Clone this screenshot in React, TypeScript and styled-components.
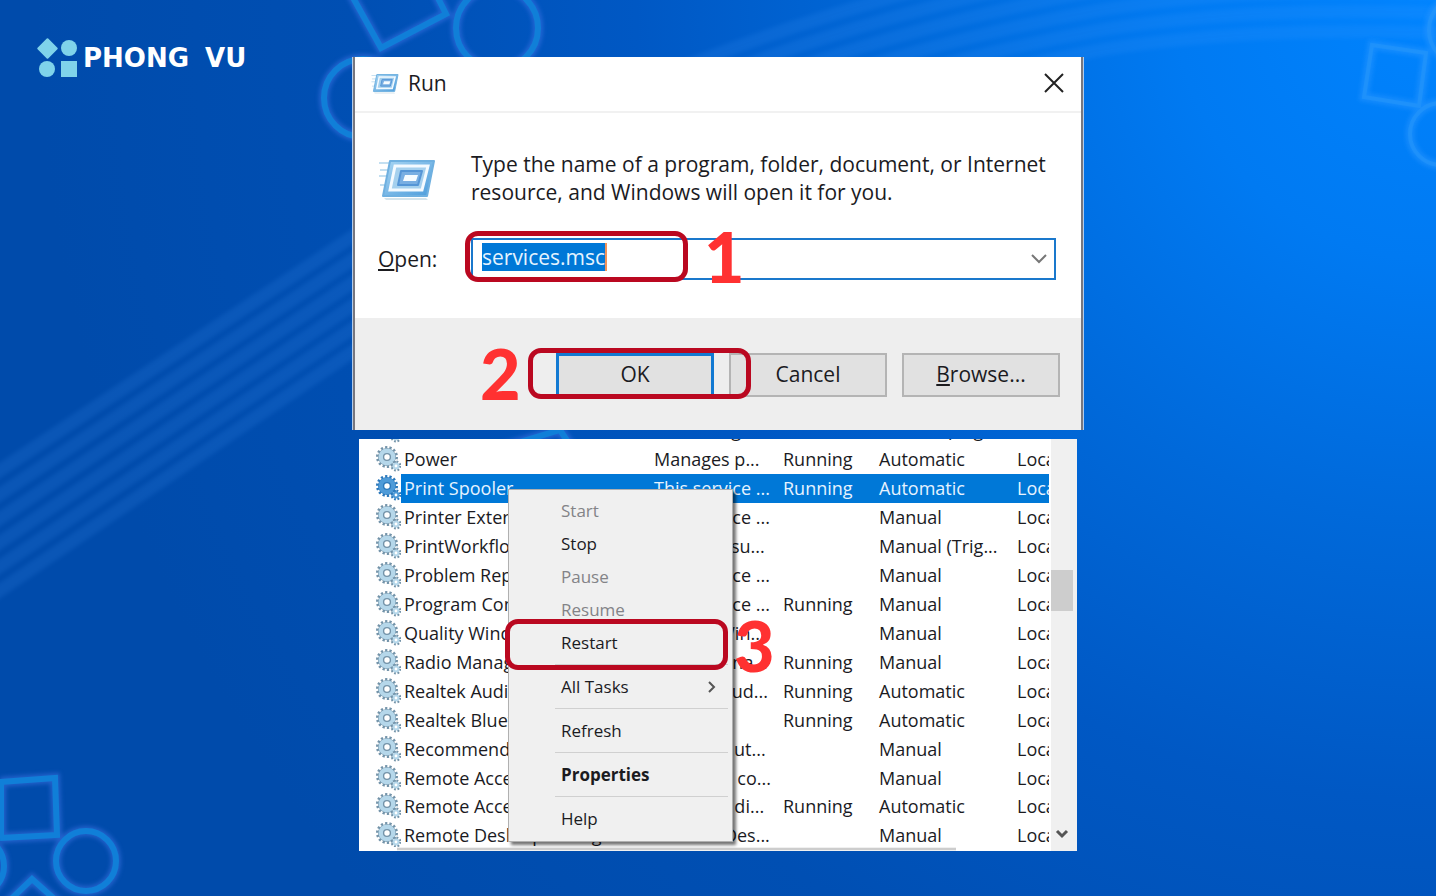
import React from "react";
import styled, { createGlobalStyle, css } from "styled-components";

const GlobalStyle = createGlobalStyle`
  *, *::before, *::after { box-sizing: border-box; }
  body {
    margin: 0;
    font-family: "Open Sans", "Noto Sans", sans-serif;
    color: #1b1b1f;
  }
`;

const Page = styled.div`
  position: relative;
  min-height: 100vh;
  overflow: hidden;
  background: radial-gradient(circle at 100% 0%, #0084ff 0, #007af2 260px, #0069da 520px, #0058c4 800px, #004fb3 1080px, #004bab 1400px);
`;

const Backdrop = styled.svg`
  position: absolute;
  inset: 0;
  width: 100%;
  height: 100%;
`;

const Brand = styled.a`
  position: absolute;
  top: 37px;
  left: 37px;
  display: flex;
  align-items: center;
  gap: 5px;
  color: #fff;
  text-decoration: none;
`;

const BrandName = styled.span`
  display: flex;
  gap: 16px;
  font: bold 26px/40px "DejaVu Sans", sans-serif;
`;

const Stage = styled.main`
  position: relative;
  display: flex;
  flex-direction: column;
  align-items: center;
  gap: 9px;
  padding: 57px 16px 45px;
`;

const Dialog = styled.section`
  position: relative;
  width: 100%;
  max-width: 732px;
  background: #fff;
  border: solid #b4cbe8;
  border-width: 0 1px;
  box-shadow: inset 2px 0 #77777f, inset -2px 0 #77777f;
`;

const TitleBar = styled.header`
  display: flex;
  align-items: center;
  gap: 9px;
  height: 56px;
  margin: 0 2px;
  padding: 0 16px 2px 16px;
  border-bottom: 2px solid #f1f1f1;
`;

const Title = styled.h1`
  flex: 1;
  margin: 0;
  font-size: 21px;
  font-weight: 400;
  line-height: 28px;
`;

const IconButton = styled.button`
  display: grid;
  place-items: center;
  padding: 0;
  border: 0;
  background: none;
`;

const DialogBody = styled.div`
  display: grid;
  grid-template-columns: 93px 1fr;
  row-gap: 32px;
  align-items: center;
  height: 205px;
  padding: 37px 27px 39px 25px;
`;

const Prompt = styled.p`
  margin: 0;
  font-size: 21px;
  line-height: 28px;
`;

const FieldLabel = styled.label`
  font-size: 21px;
  line-height: 28px;
`;

const ComboBox = styled.div`
  display: flex;
  align-items: center;
  justify-content: space-between;
  height: 42px;
  padding: 0 6px 0 9px;
  border: 2px solid #1a78cc;
`;

const CommandInput = styled.input`
  field-sizing: content;
  height: 28px;
  margin: 0 0 4px;
  padding: 0;
  border: 0;
  border-right: 2px solid #f0935a;
  border-radius: 0;
  outline: 0;
  background: #0078d7;
  color: #e4f3ff;
  font: 400 21px/28px "Open Sans", sans-serif;
`;

const DialogFooter = styled.footer`
  display: flex;
  justify-content: flex-end;
  gap: 15px;
  height: 112px;
  margin: 0 2px;
  padding: 35px 21px;
  background: #eee;
`;

const PushButton = styled.button<{ $primary?: boolean }>`
  width: 158px;
  height: 44px;
  padding: 0 0 2px;
  border: ${(p) => (p.$primary ? "3px solid #1279d2" : "2px solid #b4b4b4")};
  background: #e1e1e1;
  color: #1b1b1f;
  font: 400 21px/28px "Open Sans", sans-serif;
`;

const Services = styled.section`
  position: relative;
  width: 100%;
  max-width: 718px;
`;

const ListView = styled.div`
  display: flex;
  height: 412px;
  overflow: hidden;
  background: #fff;
`;

const ListArea = styled.div`
  flex: 1;
  min-width: 0;
  display: flex;
  flex-direction: column;
  padding-left: 16px;
`;

const Rows = styled.div`
  height: 408px;
  overflow: hidden;
`;

const Table = styled.table`
  width: 100%;
  height: 434px;
  margin-top: -23px;
  table-layout: fixed;
  border-collapse: collapse;
  font-size: 18px;
  line-height: 24px;
`;

const Cell = styled.td`
  padding: 0 0 0 3px;
  overflow: hidden;
  white-space: nowrap;
`;

const IconCell = styled(Cell)`
  padding: 0;
  line-height: 0;
`;

const Row = styled.tr<{ $selected: boolean }>`
  ${(p) =>
    p.$selected &&
    css`
      color: #e6f3ff;
      ${Cell}:not(:first-child) {
        background: #0078d7;
      }
    `}
`;

const HorizontalScroll = styled.div`
  height: 4px;
  margin-right: 93px;
  margin-left: 22px;
  border-top: 1px solid #f0f0f0;
  border-bottom: 1px solid #f0f0f0;
  background: #cdcdcd;
`;

const VerticalScroll = styled.div`
  display: flex;
  flex-direction: column;
  align-items: center;
  justify-content: space-between;
  width: 26px;
  margin-left: 2px;
  padding: 131px 4px 11px 0;
  background: #f0f0f0;
`;

const ScrollThumb = styled.div`
  width: 22px;
  height: 41px;
  background: #cdcdcd;
`;

const Menu = styled.ul`
  position: absolute;
  top: 50px;
  left: 149px;
  width: 225px;
  height: 353px;
  margin: 0;
  padding: 4px 4px 0 46px;
  list-style: none;
  background: #f0f0f0;
  border: 1px solid #b0b0b0;
  box-shadow: 3px 3px 3px rgba(0, 0, 0, 0.55);
`;

const MenuSeparator = styled.li`
  height: 11px;
  padding: 5px 0;
  background: #d0d0d0 content-box;
`;

const MenuItem = styled.button<{ $bold?: boolean }>`
  display: flex;
  align-items: center;
  justify-content: space-between;
  width: 100%;
  height: 33px;
  padding: 0 12px 0 6px;
  border: 0;
  background: none;
  color: #1b1b1f;
  font: ${(p) => (p.$bold ? 700 : 400)} 17px/24px "Open Sans", sans-serif;

  &:disabled {
    color: #838387;
  }
`;

const Ring = styled.div<{ $x: number; $y: number }>`
  position: absolute;
  left: ${(p) => p.$x}px;
  top: ${(p) => p.$y}px;
  width: 223px;
  height: 51px;
  border: 5px solid #ba0820;
  border-radius: 13px;
  pointer-events: none;
`;

const Step = styled.strong<{ $x: number; $y: number }>`
  position: absolute;
  left: ${(p) => p.$x}px;
  top: ${(p) => p.$y}px;
  color: #ff3131;
  font: 900 70px/70px Lato, sans-serif;
  pointer-events: none;
`;

const RunIcon = ({ size }: { size: number }) => (
  <svg width={size} height={Math.round(size * 0.78)} viewBox="0 0 58 45" aria-hidden="true">
    <defs>
      <linearGradient id="run" x1="0" y1="0" x2="1" y2="1">
        <stop offset="0" stopColor="#a9d6f3" />
        <stop offset="1" stopColor="#4b9bdb" />
      </linearGradient>
    </defs>
    <path d="M1 7h12M2 14h10M1 20h9M2 29h7" stroke="#c3dff1" strokeWidth="2" />
    <path d="M6 42h42l2 2H8z" fill="#d5e4ec" />
    <path d="M12 5H56L49 40H5Z" fill="url(#run)" stroke="#6fb0e0" strokeWidth="2" strokeLinejoin="round" />
    <path d="M17 10H50L44 34H12Z" fill="#a5d0ee" stroke="#f4faff" strokeWidth="3" />
    <path d="M23 15H44L40 29H20Z" fill="#79aee2" stroke="#5595d6" strokeWidth="2" strokeLinejoin="round" />
    <path d="M27 19H40L38 25H25Z" fill="#f6fbff" />
  </svg>
);

const GearIcon = ({ selected }: { selected: boolean }) => {
  const rim = selected ? "#2b78bb" : "#7393a9";
  const face = selected ? "#4f9bd8" : "#b5d7ea";
  return (
    <svg width="26" height="26" viewBox="0 0 26 26" aria-hidden="true">
      <circle cx="12" cy="11" r="9.5" fill="none" stroke={rim} strokeWidth="3" strokeDasharray="2.2 2.06" />
      <circle cx="12" cy="11" r="6" fill="none" stroke={rim} strokeWidth="6" />
      <circle cx="12" cy="11" r="6" fill="none" stroke={face} strokeWidth="5" />
      <circle cx="12" cy="11" r="3.4" fill="#fff" stroke={rim} strokeWidth="1.4" />
      <circle cx="21" cy="20" r="4" fill="none" stroke={rim} strokeWidth="3" strokeDasharray="1.6 1.54" />
      <circle cx="21" cy="20" r="2.4" fill="#fff" stroke={face} strokeWidth="2" />
    </svg>
  );
};

type Service = [name: string, description: string, status: string, startup: string];

const services: Service[] = [
  ["Portable Device Enumerator", "Enforces g...", "", "Manual (Trig..."],
  ["Power", "Manages p...", "Running", "Automatic"],
  ["Print Spooler", "This service ...", "Running", "Automatic"],
  ["Printer Extensions and N...", "This service ...", "", "Manual"],
  ["PrintWorkflow", "Provides su...", "", "Manual (Trig..."],
  ["Problem Reports Control...", "This service ...", "", "Manual"],
  ["Program Compatibility A...", "This service ...", "Running", "Manual"],
  ["Quality Windows Audio V...", "Quality Win...", "", "Manual"],
  ["Radio Management Servi...", "Radio Mana...", "Running", "Manual"],
  ["Realtek Audio Universal S...", "Realtek Aud...", "Running", "Automatic"],
  ["Realtek Bluetooth Device", "", "Running", "Automatic"],
  ["Recommended Troublesh...", "Enables aut...", "", "Manual"],
  ["Remote Access Auto Con...", "Creates a co...", "", "Manual"],
  ["Remote Access Connecti...", "Manages di...", "Running", "Automatic"],
  ["Remote Desktop Configu...", "Remote Des...", "", "Manual"],
];

const rays = [0, 1, 2, 3, 4, 5];

const rayPath = (i: number) =>
  `M-10 ${477 + 24 * i}L352 ${237 + 23 * i}C560 ${104 + 23 * i} 800 ${4 + 20 * i} 1100 ${-50 + 20 * i}` +
  `Q1250 ${-74 + 20 * i} 1446 ${-67 + 20 * i}`;

export default function App() {
  return (
    <Page>
      <GlobalStyle />
      <Backdrop viewBox="0 0 1436 896" preserveAspectRatio="xMidYMid slice" aria-hidden="true">
        <defs>
          <filter id="glow" x="-20%" y="-20%" width="140%" height="140%">
            <feGaussianBlur stdDeviation="2" />
          </filter>
          <g id="shapes" fill="none">
            <path d="M351 -6L381 48L446 14L434 -10" />
            <circle cx="497" cy="28" r="41" />
            <circle cx="363" cy="98" r="39" />
            <path d="M0 782L55 778L57 835L0 838M1 782V838" />
            <circle cx="86" cy="861" r="30" />
            <circle cx="-26" cy="866" r="30" />
            <path d="M6 904L32 879L60 904" />
            <path d="M500 448L560 430L572 448" />
          </g>
          <g id="cornerShapes" fill="none">
            <path d="M1372 45L1426 53L1419 106L1364 97Z" />
            <circle cx="1441" cy="134" r="31" />
            <circle cx="1464" cy="30" r="35" />
          </g>
        </defs>
        <g fill="none" stroke="#4fa0ff" strokeWidth="13" opacity="0.13" filter="url(#glow)">
          {rays.map((i) => (
            <path key={i} d={rayPath(i)} />
          ))}
        </g>
        <use href="#shapes" stroke="#3f74e6" strokeWidth="10" opacity="0.55" filter="url(#glow)" />
        <use href="#shapes" stroke="#107fd8" strokeWidth="6" />
        <use href="#cornerShapes" stroke="#2a96ff" strokeWidth="9" opacity="0.5" filter="url(#glow)" />
        <use href="#cornerShapes" stroke="#2496fb" strokeWidth="4" opacity="0.6" />
      </Backdrop>

      <Stage>
        <Dialog aria-labelledby="run-title">
          <TitleBar>
            <RunIcon size={28} />
            <Title id="run-title">Run</Title>
            <IconButton type="button" aria-label="Close">
              <svg width="22" height="22" viewBox="0 0 22 22" aria-hidden="true">
                <path d="M2 2L20 20M20 2L2 20" stroke="#222" strokeWidth="2" />
              </svg>
            </IconButton>
          </TitleBar>
          <DialogBody>
            <RunIcon size={58} />
            <Prompt>
              Type the name of a program, folder, document, or Internet resource, and Windows will open it for you.
            </Prompt>
            <FieldLabel htmlFor="command">
              <u>O</u>pen:
            </FieldLabel>
            <ComboBox>
              <CommandInput id="command" type="text" defaultValue="services.msc" />
              <IconButton type="button" aria-label="Show recent commands">
                <svg width="18" height="12" viewBox="0 0 18 12" aria-hidden="true">
                  <path d="M2 2L9 9L16 2" fill="none" stroke="#777" strokeWidth="2" />
                </svg>
              </IconButton>
            </ComboBox>
          </DialogBody>
          <DialogFooter>
            <PushButton type="button" $primary>OK</PushButton>
            <PushButton type="button">Cancel</PushButton>
            <PushButton type="button">
              <u>B</u>rowse...
            </PushButton>
          </DialogFooter>
          <Ring $x={112} $y={174} />
          <Step $x={351} $y={164}>1</Step>
          <Ring $x={175} $y={291} />
          <Step $x={127} $y={281}>2</Step>
        </Dialog>

        <Services aria-label="Services">
          <ListView>
            <ListArea>
              <Rows>
                <Table>
                  <colgroup>
                    <col style={{ width: 26 }} />
                    <col style={{ width: 250 }} />
                    <col style={{ width: 129 }} />
                    <col style={{ width: 96 }} />
                    <col style={{ width: 138 }} />
                    <col />
                  </colgroup>
                  <tbody>
                    {services.map(([name, description, status, startup]) => {
                      const selected = name === "Print Spooler";
                      return (
                        <Row key={name} $selected={selected}>
                          <IconCell>
                            <GearIcon selected={selected} />
                          </IconCell>
                          <Cell>{name}</Cell>
                          <Cell>{description}</Cell>
                          <Cell>{status}</Cell>
                          <Cell>{startup}</Cell>
                          <Cell>Local System</Cell>
                        </Row>
                      );
                    })}
                  </tbody>
                </Table>
              </Rows>
              <HorizontalScroll />
            </ListArea>
            <VerticalScroll>
              <ScrollThumb />
              <svg width="14" height="12" viewBox="0 0 14 12" aria-hidden="true">
                <path d="M2 3L7 8L12 3" fill="none" stroke="#555" strokeWidth="3" />
              </svg>
            </VerticalScroll>
          </ListView>

          <Menu>
            <li><MenuItem type="button" disabled>Start</MenuItem></li>
            <li><MenuItem type="button">Stop</MenuItem></li>
            <li><MenuItem type="button" disabled>Pause</MenuItem></li>
            <li><MenuItem type="button" disabled>Resume</MenuItem></li>
            <li><MenuItem type="button">Restart</MenuItem></li>
            <MenuSeparator role="separator" />
            <li>
              <MenuItem type="button">
                All Tasks
                <svg width="8" height="12" viewBox="0 0 8 12" aria-hidden="true">
                  <path d="M1 1L6 6L1 11" fill="none" stroke="#555" strokeWidth="2" />
                </svg>
              </MenuItem>
            </li>
            <MenuSeparator role="separator" />
            <li><MenuItem type="button">Refresh</MenuItem></li>
            <MenuSeparator role="separator" />
            <li><MenuItem type="button" $bold>Properties</MenuItem></li>
            <MenuSeparator role="separator" />
            <li><MenuItem type="button">Help</MenuItem></li>
          </Menu>
          <Ring $x={146} $y={180} />
          <Step $x={375} $y={171}>3</Step>
        </Services>
      </Stage>

      <Brand href="#">
        <svg width="41" height="41" viewBox="0 0 41 41" fill="#7fd3ea" aria-hidden="true">
          <rect x="3" y="4" width="15" height="15" rx="1" transform="rotate(45 10.5 11.5)" />
          <circle cx="32" cy="11" r="8" />
          <circle cx="10" cy="32" r="8" />
          <rect x="24" y="24" width="16" height="16" />
        </svg>
        <BrandName>
          <span>PHONG</span>
          <span>VU</span>
        </BrandName>
      </Brand>
    </Page>
  );
}
